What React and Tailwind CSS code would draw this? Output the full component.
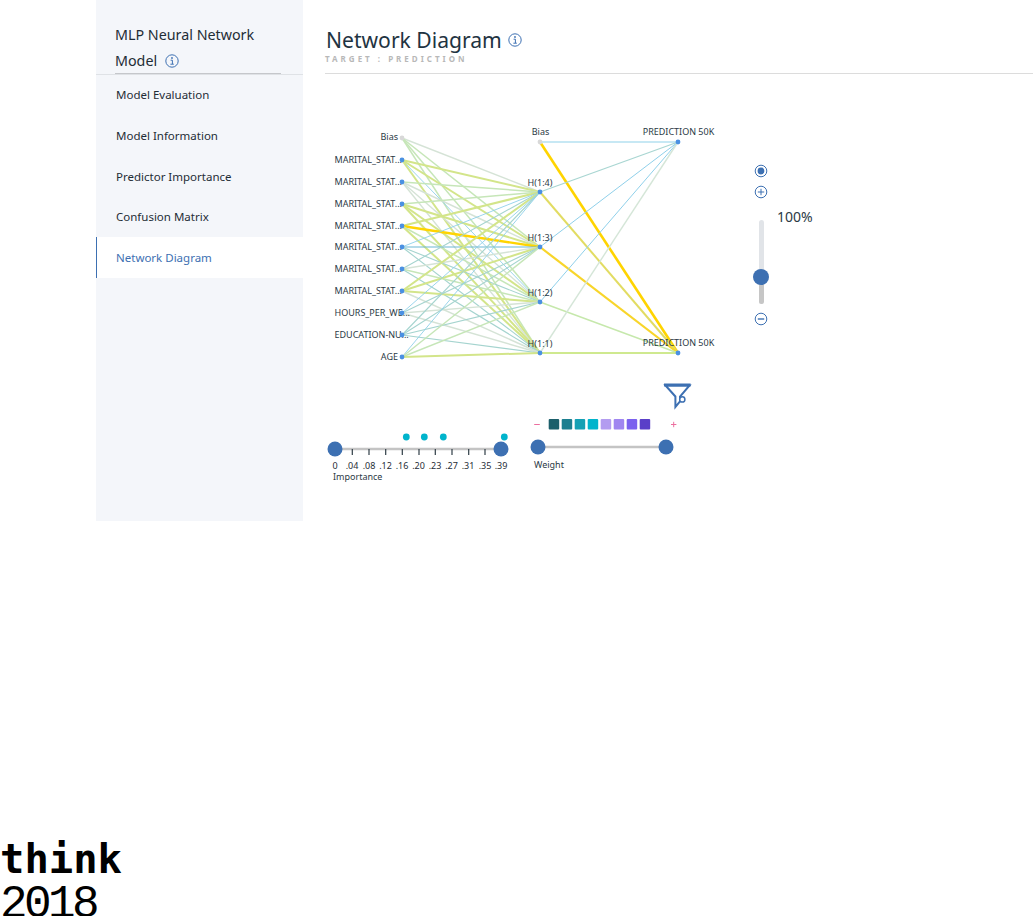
import React from "react";

const plex = { fontFamily: "'Noto Sans', sans-serif" };

const navItems = [
  "Model Evaluation",
  "Model Information",
  "Predictor Importance",
  "Confusion Matrix",
  "Network Diagram",
];

const inputs = [
  "Bias",
  "MARITAL_STAT...",
  "MARITAL_STAT...",
  "MARITAL_STAT...",
  "MARITAL_STAT...",
  "MARITAL_STAT...",
  "MARITAL_STAT...",
  "MARITAL_STAT...",
  "HOURS_PER_WE...",
  "EDUCATION-NU...",
  "AGE",
];

const inputY = [138, 160, 182, 204, 226, 247, 269, 291, 313, 335, 357];
const hiddenY = [192, 247, 302, 353];
const hiddenNames = ["H(1:4)", "H(1:3)", "H(1:2)", "H(1:1)"];

// edge styles: [colour, width]
const Y = ["#ffd400", 2.4];
const L = ["#d3e58a", 2];
const G = ["#c6e6b8", 1.5];
const S = ["#d5e3d6", 1.4];
const T = ["#a5d4cf", 1.1];
const B = ["#8fd0ea", 0.9];
const D = ["#6cb8d4", 1.2];

const weights = [
  [S, G, G, G],
  [L, L, B, L],
  [G, S, S, S],
  [G, L, L, L],
  [L, Y, G, L],
  [B, D, T, T],
  [T, S, G, T],
  [L, L, L, S],
  [B, T, S, S],
  [T, T, T, T],
  [B, G, G, L],
];

const outputEdges = [
  [142, 142, ["#b5e0f0", 1.4]],
  [142, 353, ["#ffd400", 2.6]],
  [192, 142, ["#a9d6d2", 1.3]],
  [192, 353, ["#e2dc62", 2]],
  [247, 142, ["#8fd0ea", 1]],
  [247, 353, ["#f8d52a", 2.2]],
  [302, 142, ["#8fd0ea", 1]],
  [302, 353, ["#c6e8ac", 1.4]],
  [353, 142, ["#d5e6d8", 1.4]],
  [353, 353, ["#cfe98f", 2]],
];

const ticks = [352.3, 369, 385.7, 402.3, 419, 435.3, 452, 468.7, 485];
const tickLabels = [
  [335, "0"],
  [352, ".04"],
  [369, ".08"],
  [385.5, ".12"],
  [402, ".16"],
  [418.5, ".20"],
  [435, ".23"],
  [451.5, ".27"],
  [468, ".31"],
  [485, ".35"],
  [501, ".39"],
];
const swatches = ["#1c5f6b", "#1c7f90", "#14a0b4", "#00b4cc", "#b39cf0", "#a086f0", "#7b61ee", "#5a3fc8"];

const InfoIcon = () => (
  <svg width="14" height="14" viewBox="0 0 14 14" fill="none" className="shrink-0">
    <circle cx="7" cy="7" r="6.2" stroke="#3d70b2" strokeWidth="1" />
    <circle cx="7" cy="4" r="0.9" fill="#3d70b2" />
    <path d="M5.6 6.2H7.4V10M5.4 10.2H8.8" stroke="#3d70b2" strokeWidth="1" />
  </svg>
);

const RoundButton = ({ children }) => (
  <svg width="14" height="14" viewBox="0 0 14 14" fill="none">
    <circle cx="7" cy="7" r="5.8" stroke="#3d70b2" strokeWidth="1" />
    {children}
  </svg>
);

// the network itself, coordinates are page coordinates shifted by the viewBox
const Network = () => (
  <svg width="420" height="250" viewBox="325 122 420 250" className="shrink-0" style={plex}>
    {weights.map((row, i) =>
      row.map((edge, j) => (
        <line
          key={`${i}-${j}`}
          x1="402"
          y1={inputY[i]}
          x2="540"
          y2={hiddenY[j]}
          stroke={edge[0]}
          strokeWidth={edge[1]}
        />
      ))
    )}
    {outputEdges.map(([from, to, edge], i) => (
      <line key={i} x1="540" y1={from} x2="678" y2={to} stroke={edge[0]} strokeWidth={edge[1]} />
    ))}
    {inputs.map((name, i) => {
      const short = name.length < 5;
      return (
        <g key={i}>
          <text
            x={short ? 398 : 334.5}
            y={inputY[i] + (i === 0 ? 2 : 3)}
            textAnchor={short ? "end" : "start"}
            fontSize="9"
            fill="#2b3a45"
          >
            {name}
          </text>
          <circle cx="402" cy={inputY[i]} r="2.4" fill={i === 0 ? "#d8d8d8" : "#4a90e2"} />
        </g>
      );
    })}
    <text x="540.5" y="135" textAnchor="middle" fontSize="9" fill="#2b3a45">
      Bias
    </text>
    <circle cx="540" cy="142" r="2.4" fill="#d8d8d8" />
    {hiddenY.map((y, i) => (
      <g key={y}>
        <text x="540" y={y - 6} textAnchor="middle" fontSize="9" fill="#2b3a45">
          {hiddenNames[i]}
        </text>
        <circle cx="540" cy={y} r="2.4" fill="#4a90e2" />
      </g>
    ))}
    {[142, 353].map((y) => (
      <g key={y}>
        <text x="678.5" y={y === 142 ? 135 : 346} textAnchor="middle" fontSize="9" fill="#2b3a45">
          PREDICTION 50K
        </text>
        <circle cx="678" cy={y} r="2.4" fill="#4a90e2" />
      </g>
    ))}
  </svg>
);

const ZoomControls = () => (
  <div className="flex flex-col items-center w-[14px] ml-[9px] pt-[42px]">
    <RoundButton>
      <circle cx="7" cy="7" r="3.4" fill="#3d70b2" />
    </RoundButton>
    <div className="mt-[7px]">
      <RoundButton>
        <path d="M3.8 7H10.2M7 3.8V10.2" stroke="#3d70b2" strokeWidth="1" />
      </RoundButton>
    </div>
    <div className="relative w-[5px] h-[84px] mt-[21px] rounded-full bg-[#e1e4e8] overflow-visible">
      <div className="absolute left-0 right-0 bottom-0 h-[27px] rounded-b-full bg-[#c6c6c6]" />
      <div className="absolute left-[-5.5px] top-[49px] w-4 h-4 rounded-full bg-[#3d70b2]" />
    </div>
    <div className="mt-[8px]">
      <RoundButton>
        <path d="M3.8 7H10.2" stroke="#3d70b2" strokeWidth="1.4" />
      </RoundButton>
    </div>
  </div>
);

const Legends = () => (
  <svg width="372" height="110" viewBox="325 380 372 110" className="block" style={plex}>
    {/* importance slider */}
    <line x1="335" y1="449" x2="501" y2="449" stroke="#c4c4c4" strokeWidth="2.4" />
    {ticks.map((x) => (
      <line key={x} x1={x} y1="449" x2={x} y2="455" stroke="#2f3d46" strokeWidth="1.2" />
    ))}
    {[406.3, 424.3, 443.3, 504.3].map((x) => (
      <circle key={x} cx={x} cy="437" r="3.4" fill="#00b4cc" />
    ))}
    <circle cx="335" cy="449" r="7.5" fill="#3d70b2" />
    <circle cx="501" cy="449" r="7.5" fill="#3d70b2" />
    {tickLabels.map(([x, t]) => (
      <text key={t} x={x} y="469" textAnchor="middle" fontSize="9" fill="#1f2d36">
        {t}
      </text>
    ))}
    <text x="333" y="480" fontSize="9" fill="#2b3a45">
      Importance
    </text>

    {/* weight legend */}
    <path d="M534.2 424.5H539.8M671 424.5H676.4M673.7 421.8V427.2" stroke="#ec6f9f" strokeWidth="1" />
    {swatches.map((c, i) => (
      <rect key={c} x={548.7 + i * 13} y="419" width="10.5" height="10.5" rx="1" fill={c} />
    ))}
    <line x1="538" y1="447" x2="666" y2="447" stroke="#c4c4c4" strokeWidth="2.4" />
    <circle cx="538" cy="447" r="7.5" fill="#3d70b2" />
    <circle cx="666" cy="447" r="7.5" fill="#3d70b2" />
    <text x="534" y="468" fontSize="9" fill="#2b3a45">
      Weight
    </text>

    {/* filter icon */}
    <path
      d="M665.5 385.5H689.5L680 396.5V401.5L675.4 407V396.5Z"
      fill="none"
      stroke="#3d70b2"
      strokeWidth="2"
    />
    <path d="M664 385H690.6" stroke="#3d70b2" strokeWidth="3" />
    <circle cx="682.3" cy="399.4" r="2.6" fill="#fff" stroke="#3d70b2" strokeWidth="1.5" />
  </svg>
);

export default function App() {
  return (
    <div className="bg-white" style={plex}>
      <div className="flex h-[521px] pl-24">
        {/* ================= SIDEBAR ================= */}
        <aside className="w-[207px] shrink-0 bg-[#f4f6fa]">
          <div className="h-[75px] pt-[22px] border-b border-[#dfe2e6]">
            <div className="ml-[19px] mr-[22px] h-[52px] border-b border-[#c5c7cb] text-[14.3px] leading-[26px] text-[#1f2d36]">
              <div>MLP Neural Network</div>
              <div className="flex items-center gap-2">
                Model <InfoIcon />
              </div>
            </div>
          </div>
          <nav className="-mt-[0.4px]">
            {navItems.map((item) => {
              const active = item === "Network Diagram";
              return (
                <div
                  key={item}
                  className={
                    active
                      ? "h-[40.7px] flex items-center pl-[19px] bg-white border-l border-[#3d70b2] text-[#3d70b2] text-[11.5px]"
                      : "h-[40.7px] flex items-center pl-5 text-[#1f2d36] text-[11.5px]"
                  }
                >
                  {item}
                </div>
              );
            })}
          </nav>
        </aside>

        {/* ================= MAIN ================= */}
        <main className="flex-1 min-w-0 pl-[22px]">
          <div className="h-[74px] pt-[25px] border-b border-[#dcdcdc]">
            <div className="flex items-center gap-[6px] pl-px text-[21.1px] leading-[30px] text-[#1f3442]">
              Network Diagram <InfoIcon />
            </div>
            <div className="text-[8px] leading-[8px] font-bold tracking-[3px] text-[#b8b8b8]">
              TARGET : PREDICTION
            </div>
          </div>
          <div className="flex mt-[48px]">
            <Network />
            <ZoomControls />
            <div className="ml-[9px] mt-[85px] text-[14px] leading-5 text-[#2b3a45]">100%</div>
          </div>
          <div className="mt-[8px]">
            <Legends />
          </div>
        </main>
      </div>

      {/* ================= LOGO ================= */}
      <div className="mt-[318px] text-black">
        <div
          className="text-[40.5px] leading-[40px] font-bold"
          style={{ fontFamily: "'DejaVu Sans Mono', monospace" }}
        >
          think
        </div>
        <div
          className="mt-[15px] text-[46px] leading-[22px] tracking-[-3.6px]"
          style={{ fontFamily: "'Liberation Mono', monospace" }}
        >
          2018
        </div>
      </div>
    </div>
  );
}
